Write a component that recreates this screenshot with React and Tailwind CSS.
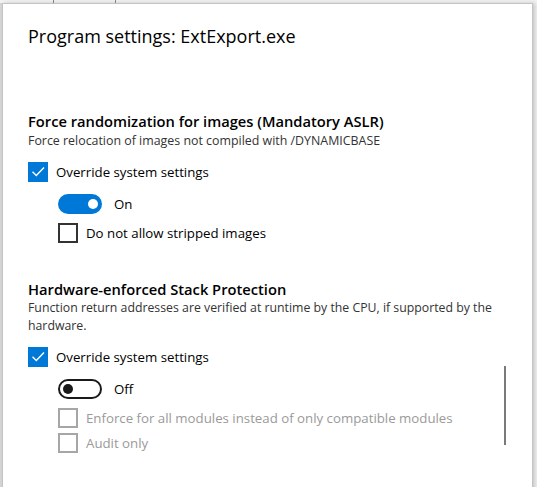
import React from 'react';

const font = { fontFamily: '"Open Sans", "Noto Sans", sans-serif' };

function CheckBox({ checked, disabled }) {
  if (checked) {
    return (
      <span className="w-5 h-5 bg-[#0078d7] flex items-center justify-center shrink-0">
        <svg width="20" height="20" viewBox="0 0 20 20">
          <path d="M4.5 9.8 L8.3 13.6 L16 5.4" fill="none" stroke="#fff" strokeWidth="1.4" />
        </svg>
      </span>
    );
  }
  return (
    <span
      className={
        'w-5 h-5 border-2 shrink-0 bg-white ' +
        (disabled ? 'border-[#a6a6a6]' : 'border-[#333333]')
      }
    />
  );
}

function Toggle({ on }) {
  if (on) {
    return (
      <span className="w-11 h-5 rounded-full bg-[#0078d7] flex items-center justify-end pr-[4px] shrink-0">
        <span className="w-[10px] h-[10px] rounded-full bg-white" />
      </span>
    );
  }
  return (
    <span className="w-11 h-5 rounded-full border-2 border-[#1a1a1a] flex items-center pl-[3px] shrink-0">
      <span className="w-[10px] h-[10px] rounded-full bg-[#1a1a1a]" />
    </span>
  );
}

function Row({ children, label, disabled, className }) {
  return (
    <div className={'flex items-center gap-2 h-5 ' + (className || '')}>
      {children}
      <span className={'text-[13.25px] leading-5 ' + (disabled ? 'text-[#9a9a9a]' : 'text-black')}>{label}</span>
    </div>
  );
}

export default function App() {
  return (
    <div className="w-[537px] h-[487px] bg-[#f2f2f2] relative overflow-hidden" style={font}>
      <div className="absolute left-[53px] top-0 w-px h-[3px] bg-[#8a8a8a]" />
      <div className="absolute left-[115px] top-0 w-px h-[3px] bg-[#8a8a8a]" />
      <div className="absolute left-0 top-[3px] w-[3px] h-full bg-[#d6d6d6]" />
      <div className="ml-[2px] mt-[3px] w-[531px] h-[520px] bg-white border border-[#c4c4c4] shadow-[2px_0_4px_rgba(0,0,0,0.18)] relative">
        <div className="pl-[25px] pr-[35px]">
          <h1 className="text-[18px] leading-[28px] text-black pt-[18px]">Program settings: ExtExport.exe</h1>

          <div className="mt-[61px]">
            <h2 className="text-[14.7px] font-semibold leading-5 text-black">Force randomization for images (Mandatory ASLR)</h2>
            <p className="text-[12.4px] leading-[18px] text-[#333333] mt-[1px]">Force relocation of images not compiled with /DYNAMICBASE</p>
            <Row label="Override system settings" className="mt-[12px]">
              <CheckBox checked />
            </Row>
            <div className="pl-[30px]">
              <div className="flex items-center gap-3 mt-3 h-5">
                <Toggle on />
                <span className="text-[13.25px] leading-5 text-black">On</span>
              </div>
              <Row label="Do not allow stripped images" className="mt-[9px]">
                <CheckBox />
              </Row>
            </div>
          </div>

          <div className="mt-[36px]">
            <h2 className="text-[14.7px] font-semibold leading-5 text-black">Hardware-enforced Stack Protection</h2>
            <p className="text-[12.3px] leading-[18px] text-[#333333]">
              Function return addresses are verified at runtime by the CPU, if supported by the hardware.
            </p>
            <Row label="Override system settings" className="mt-[12px]">
              <CheckBox checked />
            </Row>
            <div className="pl-[30px]">
              <div className="flex items-center gap-3 mt-3 h-5">
                <Toggle />
                <span className="text-[13.25px] leading-5 text-black">Off</span>
              </div>
              <Row label="Enforce for all modules instead of only compatible modules" disabled className="mt-[9px]">
                <CheckBox disabled />
              </Row>
              <Row label="Audit only" disabled className="mt-[5px]">
                <CheckBox disabled />
              </Row>
            </div>
          </div>
        </div>
        <div className="absolute left-[501px] top-[362px] w-[2px] h-[79px] bg-[#7a7a7a]" />
      </div>
    </div>
  );
}
